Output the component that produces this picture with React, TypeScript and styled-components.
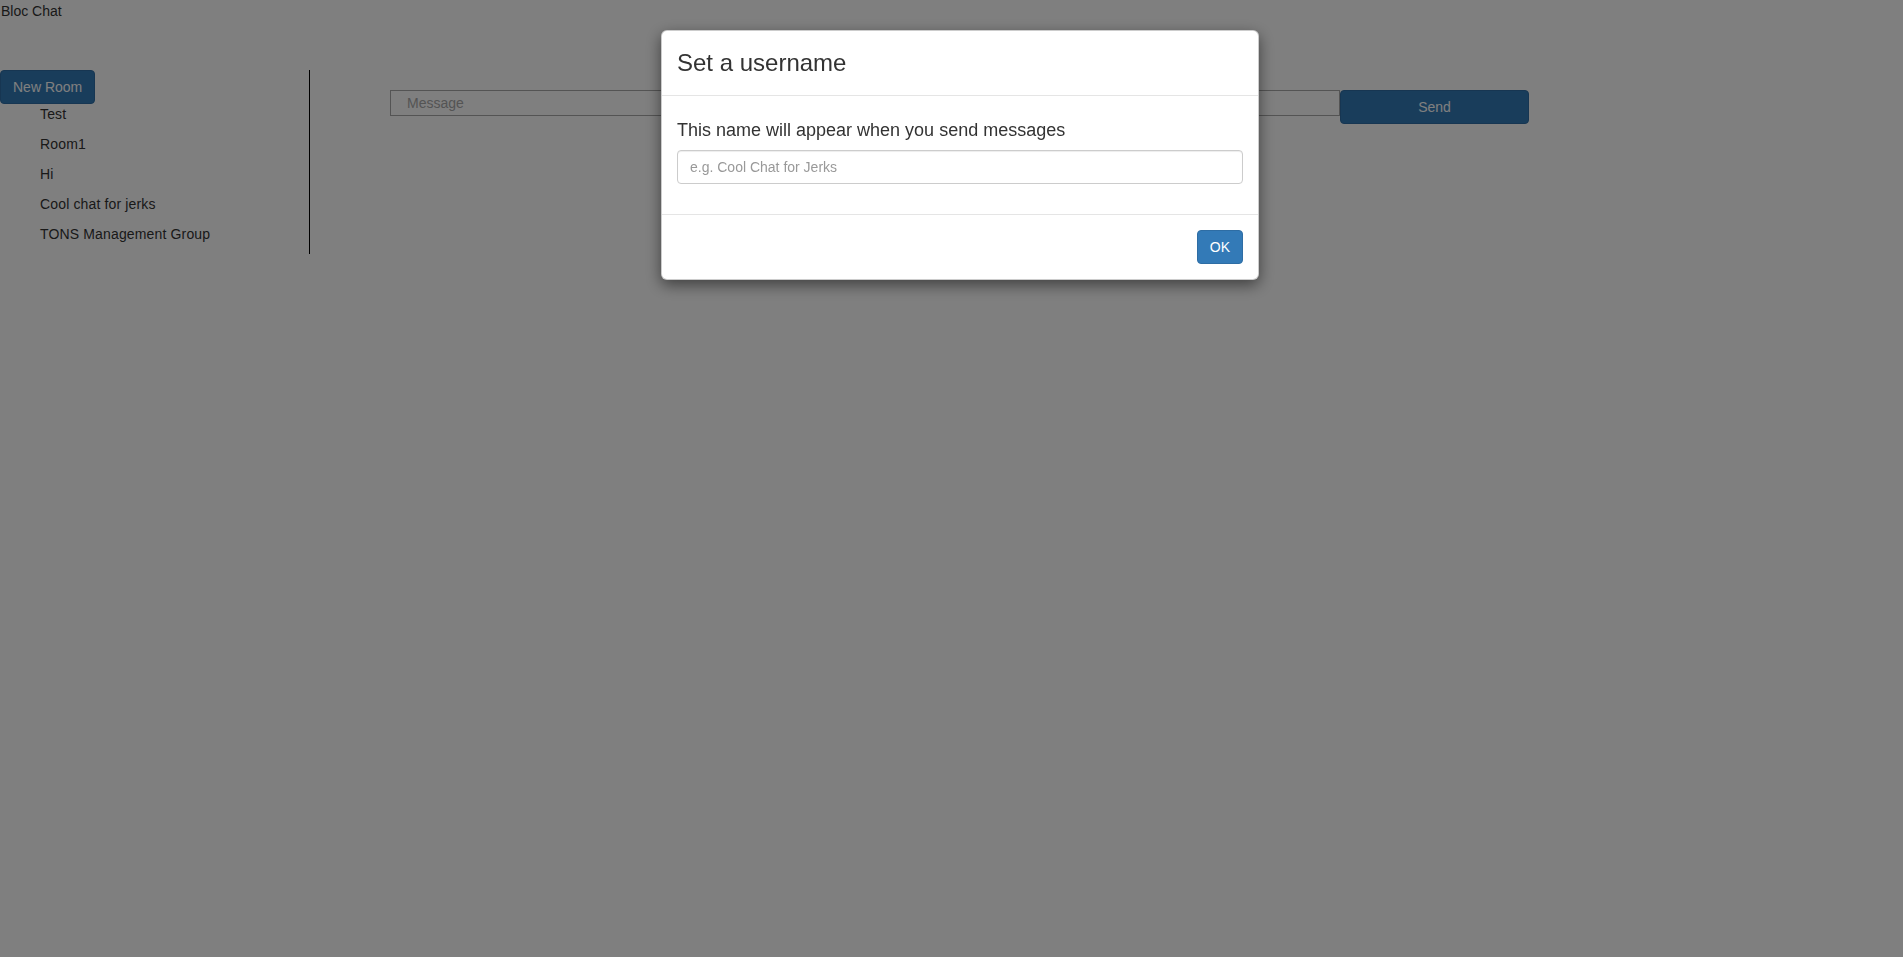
import React from 'react';
import styled, { createGlobalStyle } from 'styled-components';

const GlobalStyle = createGlobalStyle`
  html, body {
    margin: 0;
    padding: 0;
    background: #fff;
  }
  body {
    font-family: "Liberation Sans", Arial, Helvetica, sans-serif;
    font-size: 14px;
    line-height: 1.42857;
    color: #333;
  }
  * {
    box-sizing: border-box;
  }
`

const Page = styled.div`
  min-height: 957px;
`

const Brand = styled.div`
  height: 20px;
  line-height: 20px;
  padding: 1px 0 0 1px;
`

const Layout = styled.div`
  display: flex;
  align-items: flex-start;
  margin-top: 50px;
`

const Sidebar = styled.aside`
  width: 310px;
  border-right: 1px solid #000;
`

const Button = styled.button<{ $wide?: boolean }>`
  display: inline-block;
  height: 34px;
  width: ${props => (props.$wide ? '189px' : 'auto')};
  padding: 6px 12px;
  font-family: inherit;
  font-size: 14px;
  line-height: 20px;
  color: #fff;
  background: #337ab7;
  border: 1px solid #2e6da4;
  border-radius: 4px;
  cursor: pointer;
`

const RoomList = styled.ul`
  margin: 0;
  padding: 0 0 0 40px;
  list-style: none;
`

const Room = styled.li`
  line-height: 20px;
  margin-bottom: 10px;
  letter-spacing: 0.15px;
`

const Main = styled.main`
  display: flex;
  align-items: flex-start;
  padding: 20px 0 0 80px;
`

const MessageInput = styled.input`
  width: 950px;
  height: 26px;
  padding: 0 16px;
  font-family: inherit;
  font-size: 14px;
  border: 1px solid #a9a9a9;
  &::placeholder {
    color: #a9a9a9;
  }
`

const Backdrop = styled.div`
  position: fixed;
  inset: 0;
  background: rgba(0, 0, 0, 0.5);
`

const Dialog = styled.div`
  position: fixed;
  top: 30px;
  left: 661px;
  width: 598px;
  background: #fff;
  border: 1px solid rgba(0, 0, 0, 0.2);
  border-radius: 6px;
  box-shadow: 0 5px 15px rgba(0, 0, 0, 0.5);
`

const DialogHeader = styled.div`
  padding: 15px;
  border-bottom: 1px solid #e5e5e5;
`

const DialogTitle = styled.h3`
  margin: 0;
  font-size: 24px;
  font-weight: 400;
  line-height: 1.42857;
`

const DialogBody = styled.div`
  padding: 15px;
`

const Hint = styled.h4`
  margin: 10px 0 9px;
  font-size: 18px;
  font-weight: 400;
  line-height: 1.1;
`

const FormGroup = styled.div`
  margin-bottom: 15px;
`

const TextField = styled.input`
  display: block;
  width: 100%;
  height: 34px;
  padding: 6px 12px;
  font-family: inherit;
  font-size: 14px;
  color: #555;
  border: 1px solid #ccc;
  border-radius: 4px;
  box-shadow: inset 0 1px 1px rgba(0, 0, 0, 0.075);
  &::placeholder {
    color: #999;
  }
`

const DialogFooter = styled.div`
  display: flex;
  justify-content: flex-end;
  padding: 15px;
  border-top: 1px solid #e5e5e5;
`

const rooms = ['Test', 'Room1', 'Hi', 'Cool chat for jerks', 'TONS Management Group'];

export default function App() {
  return (
    <Page>
      <GlobalStyle />
      <Brand>Bloc Chat</Brand>
      <Layout>
        <Sidebar>
          <Button>New Room</Button>
          <RoomList>
            {rooms.map(name => (
              <Room key={name}>{name}</Room>
            ))}
          </RoomList>
        </Sidebar>
        <Main>
          <MessageInput placeholder="Message" />
          <Button $wide>Send</Button>
        </Main>
      </Layout>

      <Backdrop />
      <Dialog>
        <DialogHeader>
          <DialogTitle>Set a username</DialogTitle>
        </DialogHeader>
        <DialogBody>
          <Hint>This name will appear when you send messages</Hint>
          <FormGroup>
            <TextField placeholder="e.g. Cool Chat for Jerks" />
          </FormGroup>
        </DialogBody>
        <DialogFooter>
          <Button>OK</Button>
        </DialogFooter>
      </Dialog>
    </Page>
  );
}
